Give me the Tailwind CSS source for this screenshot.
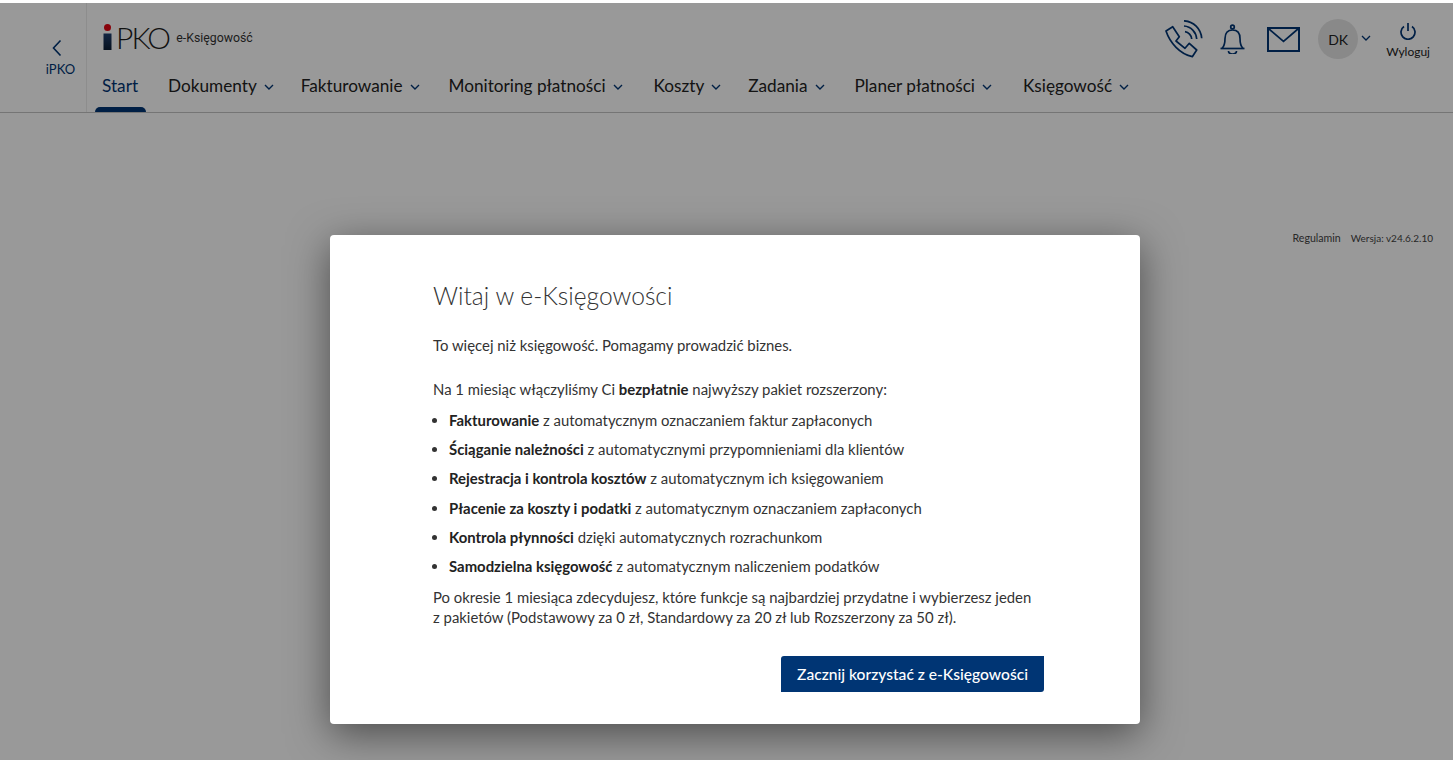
<!DOCTYPE html>
<html lang="pl">
<head>
    <meta charset="UTF-8">
    <title>e-Księgowość</title>
    <script src="https://cdn.jsdelivr.net/npm/@tailwindcss/browser@4"></script>
</head>
<body class="relative h-[760px] overflow-hidden bg-white font-['Lato',sans-serif] text-[#222]">
    <!-- Header -->
    <header class="mt-[3px] flex h-[110px] border-b border-[#c4c4c4]">
        <a class="flex w-[87px] flex-col items-center border-r border-[#ececec] pl-[35px] pt-[36px] text-[#003574]">
            <svg class="mr-[8px]" width="12" height="18" viewBox="0 0 12 18" fill="none" stroke="currentColor" stroke-width="1.6"><path d="M9.5 1.5 2.5 9l7 7.5"/></svg>
            <span class="mt-[4px] text-[13px] leading-[16px]">iPKO</span>
        </a>
        <div class="flex flex-1 flex-col pl-[8px]">
            <div class="flex items-center pl-[7px] pt-[21px]">
                <div class="relative flex h-[26px] items-end">
                    <svg width="11" height="26" viewBox="0 0 11 26"><defs><linearGradient id="ig" x1="0" y1="0" x2="0" y2="1"><stop offset="0" stop-color="#1f3f70"/><stop offset="1" stop-color="#0a1c33"/></linearGradient></defs><circle cx="5.5" cy="3.5" r="3.5" fill="#e30613"/><path d="M1.5 9.5h8V26h-8z" fill="url(#ig)"/></svg>
                    <span class="ml-[3px] text-[30px] leading-[26px] font-light tracking-[-1.8px] text-[#1d1d1d]">PKO</span>
                </div>
                <span class="ml-[7px] mt-[2px] font-['Roboto',sans-serif] text-[12.3px] text-[#333]">e-Księgowość</span>
            </div>
            <nav class="mt-[24px] flex text-[17.2px] leading-[24px]">
                <a class="relative mr-[30px] ml-[7px] h-[24px] text-[#003574]">Start<span class="absolute -left-[7px] top-[33px] h-[5px] w-[51px] rounded-t-[5px] bg-[#003574]"></span></a>
                <a class="mr-[27px] flex h-[24px] items-center">Dokumenty<svg class="ml-[7px] mt-[2px]" width="10" height="6" viewBox="0 0 10 6" fill="none" stroke="#003574" stroke-width="1.4"><path d="m1 1 4 4 4-4"/></svg></a>
                <a class="mr-[29px] flex h-[24px] items-center">Fakturowanie<svg class="ml-[7px] mt-[2px]" width="10" height="6" viewBox="0 0 10 6" fill="none" stroke="#003574" stroke-width="1.4"><path d="m1 1 4 4 4-4"/></svg></a>
                <a class="mr-[31px] flex h-[24px] items-center">Monitoring płatności<svg class="ml-[7px] mt-[2px]" width="10" height="6" viewBox="0 0 10 6" fill="none" stroke="#003574" stroke-width="1.4"><path d="m1 1 4 4 4-4"/></svg></a>
                <a class="mr-[27px] flex h-[24px] items-center">Koszty<svg class="ml-[7px] mt-[2px]" width="10" height="6" viewBox="0 0 10 6" fill="none" stroke="#003574" stroke-width="1.4"><path d="m1 1 4 4 4-4"/></svg></a>
                <a class="mr-[30px] flex h-[24px] items-center">Zadania<svg class="ml-[7px] mt-[2px]" width="10" height="6" viewBox="0 0 10 6" fill="none" stroke="#003574" stroke-width="1.4"><path d="m1 1 4 4 4-4"/></svg></a>
                <a class="mr-[31px] flex h-[24px] items-center">Planer płatności<svg class="ml-[7px] mt-[2px]" width="10" height="6" viewBox="0 0 10 6" fill="none" stroke="#003574" stroke-width="1.4"><path d="m1 1 4 4 4-4"/></svg></a>
                <a class="flex h-[24px] items-center">Księgowość<svg class="ml-[7px] mt-[2px]" width="10" height="6" viewBox="0 0 10 6" fill="none" stroke="#003574" stroke-width="1.4"><path d="m1 1 4 4 4-4"/></svg></a>
            </nav>
        </div>
        <div class="flex items-start pt-[16px] pr-[23px] text-[#003574]">
            <svg class="mt-[1px]" width="38" height="38" viewBox="0 0 38 38" fill="none" stroke="currentColor" stroke-width="1.7" stroke-linejoin="round"><path d="M1 11 7.700 6.700l6.600 10-3.300 4.300 9 7.300 4.300-5 7.400 6.700-4.400 6.700C15 34 5 23 1 11z"/><path d="M20 11.700c3.500.5 6.500 3.500 6.700 7.300"/><path d="M19 6c7 .5 12.200 6 12.700 13"/><path d="M19 .8c9.500.5 17 8 17.700 17.500"/></svg>
            <svg class="ml-[16px] mt-[5px]" width="28" height="30" viewBox="0 0 28 30" fill="none" stroke="currentColor" stroke-width="1.7"><circle cx="13.500" cy="3" r="1.800"/><path d="M3 24.500C5.500 22 6 18 6 14.500 6 9 9 6 13.500 6S21 9 21 14.500C21 18 21.500 22 24 24.500"/><path d="M1.500 24.500h24"/><path d="M9.500 27c0 4 8 4 8 0"/></svg>
            <svg class="ml-[20px] mt-[8px]" width="33" height="25" viewBox="0 0 33 25" fill="none" stroke="currentColor" stroke-width="2"><path d="M1 1h31v23H1z"/><path d="m1.500 1.500 15 13 15-13" stroke-width="1.700"/></svg>
            <div class="ml-[18px] flex h-[40px] w-[40px] items-center justify-center rounded-full bg-[#e5e5e5] text-[14px] text-[#222]">DK</div>
            <svg class="ml-[3px] mt-[16px]" width="10" height="6" viewBox="0 0 10 6" fill="none" stroke="currentColor" stroke-width="1.300"><path d="m1 1 4 4 4-4"/></svg>
            <div class="ml-[15px] flex flex-col items-center pt-[3px]">
                <svg width="18" height="18" viewBox="0 0 18 18" fill="none" stroke="currentColor" stroke-width="1.700"><path d="M9 1v8"/><path d="M5 4.500a7 7 0 1 0 8 0"/></svg>
                <span class="mt-[5px] text-[12px] leading-[14px] text-[#222]">Wyloguj</span>
            </div>
        </div>
    </header>

    <!-- Page footer links, behind the overlay -->
    <div class="flex items-center justify-end gap-[10px] pt-[118px] pr-[20px] leading-[14px] text-[#444]">
        <span class="text-[10.6px]">Regulamin</span>
        <span class="text-[10px]">Wersja: v24.6.2.10</span>
    </div>

    <!-- Modal -->
    <div class="absolute inset-x-0 bottom-0 top-[3px] flex justify-center bg-black/40 pl-[17px] pt-[232px]">
        <div class="h-[489px] w-[810px] rounded-[4px] bg-white pl-[103px] pr-[96px] pt-[45px] text-[#333] shadow-[0_10px_40px_rgba(0,0,0,0.5)]">
            <h2 class="text-[24.6px] leading-[32px] font-light text-[#333]">Witaj w e-Księgowości</h2>
            <p class="mt-[23px] text-[14.9px] leading-[20px]">To więcej niż księgowość. Pomagamy prowadzić biznes.</p>
            <p class="mt-[24px] text-[14.9px] leading-[20px]">Na 1 miesiąc włączyliśmy Ci <b class="text-[#222]">bezpłatnie</b> najwyższy pakiet rozszerzony:</p>
            <ul class="mt-[7px] list-disc pl-[16px] text-[14.9px] leading-[29.200px]">
                <li><b class="text-[#222]">Fakturowanie</b> z automatycznym oznaczaniem faktur zapłaconych</li>
                <li><b class="text-[#222]">Ściąganie należności</b> z automatycznymi przypomnieniami dla klientów</li>
                <li><b class="text-[#222]">Rejestracja i kontrola kosztów</b> z automatycznym ich księgowaniem</li>
                <li><b class="text-[#222]">Płacenie za koszty i podatki</b> z automatycznym oznaczaniem zapłaconych</li>
                <li><b class="text-[#222]">Kontrola płynności</b> dzięki automatycznych rozrachunkom</li>
                <li><b class="text-[#222]">Samodzielna księgowość</b> z automatycznym naliczeniem podatków</li>
            </ul>
            <p class="mt-[6px] text-[14.9px] leading-[20px]">Po okresie 1 miesiąca zdecydujesz, które funkcje są najbardziej przydatne i wybierzesz jeden z&nbsp;pakietów (Podstawowy za 0 zł, Standardowy za 20 zł lub Rozszerzony za 50 zł).</p>
            <div class="mt-[29px] flex justify-end">
                <button class="h-[36px] w-[263px] rounded-tl-[3px] rounded-br-[3px] bg-[#003574] text-[15.6px] font-medium text-white">Zacznij korzystać z e-Księgowości</button>
            </div>
        </div>
    </div>
</body>
</html>
